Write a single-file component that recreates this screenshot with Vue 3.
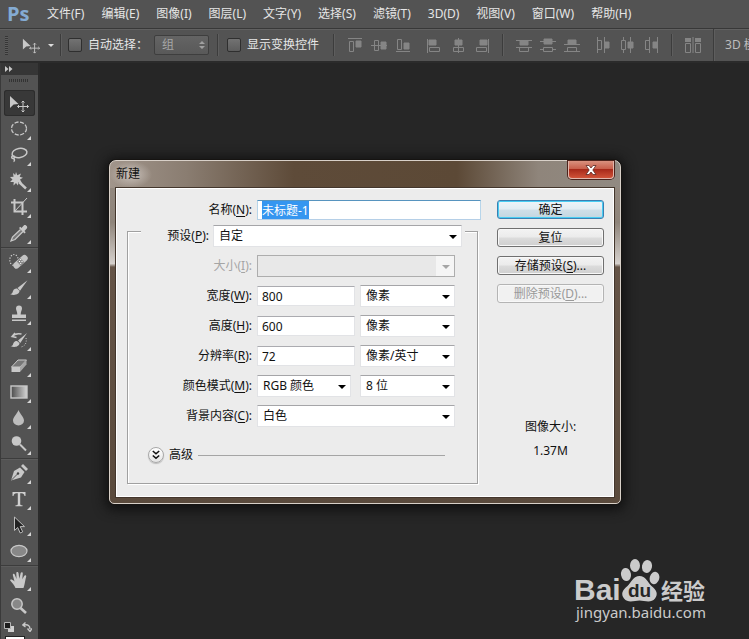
<script setup>
import { onMounted, ref } from 'vue'

const menus = ['文件(F)', '编辑(E)', '图像(I)', '图层(L)', '文字(Y)', '选择(S)', '滤镜(T)', '3D(D)', '视图(V)', '窗口(W)', '帮助(H)']

const alignGroups = [
  [
    { name: '顶对齐', art: '<path d="M5 5.5h14M6.500 8.500h4v10h-4z"/><path class="f" d="M13 8h5v6h-5z" fill="#858585"/>' },
    { name: '垂直居中对齐', art: '<path d="M4 12.500h16M7.500 7.500h4v10h-4z"/><path d="M14 9h5v7h-5z" fill="#858585"/>' },
    { name: '底对齐', art: '<path d="M5 18.500h14M6.500 6.500h4v10h-4z"/><path d="M13 10h5v6h-5z" fill="#858585"/>' }
  ],
  [
    { name: '左对齐', art: '<path d="M5.500 6v14M7.500 14.500h10v4h-10z"/><path d="M7 7h7v5h-7z" fill="#858585"/>' },
    { name: '水平居中对齐', art: '<path d="M12.500 5v15M7.500 14.500h10v4h-10z"/><path d="M9 7h7v5h-7z" fill="#858585"/>' },
    { name: '右对齐', art: '<path d="M18.500 6v14M6.500 14.500h10v4h-10z"/><path d="M10 7h7v5h-7z" fill="#858585"/>' }
  ],
  [
    { name: '按顶分布', art: '<path d="M4 7.500h16M4 14.500h16M7.500 14.500h9v4h-9z"/><path d="M8 8h8v4h-8z" fill="#858585"/>' },
    { name: '垂直居中分布', art: '<path d="M4 8.500h16M4 16.500h4M16 16.500h4M7.500 14.500h9v4h-9z"/><path d="M8 6h8v5h-8z" fill="#858585"/>' },
    { name: '按底分布', art: '<path d="M4 11.500h16M4 18.500h16M7.500 14.500h9v4h-9z"/><path d="M8 7h8v4h-8z" fill="#858585"/>' }
  ],
  [
    { name: '按左分布', art: '<path d="M6.500 4v16M13.500 4v16M6.500 7.500h4v9h-4z"/><path d="M14 9h4v6h-4z" fill="#858585"/>' },
    { name: '水平居中分布', art: '<path d="M8.500 4v3M8.500 17v3M15.500 4v16M6.500 7.500h4v9h-4z"/><path d="M13 9h5v6h-5z" fill="#858585"/>' },
    { name: '按右分布', art: '<path d="M10.500 4v16M18.500 4v16M6.500 7.500h4v9h-4z"/><path d="M14 9h4v6h-4z" fill="#858585"/>' }
  ]
]

const moveArt = '<path d="M1 3v12l3.600-3.400L9.500 11z" fill="#c8c8c8"/><path d="M14 8v11M8.500 13.500h11M12.500 9.500L14 8l1.500 1.500M12.500 17.500L14 19l1.500-1.500M10 12l-1.500 1.500L10 15M18 12l1.500 1.500L18 15" fill="none" stroke="#c8c8c8"/>'

const toolGroups = [
  [
    { name: '移动', art: moveArt, active: true },
    { name: '椭圆选框', art: '<ellipse cx="10" cy="9.500" rx="7.500" ry="6.500" fill="none" stroke="#c8c8c8" stroke-width="1.300" stroke-dasharray="4 1.600"/>', more: true },
    { name: '套索', art: '<g fill="none" stroke="#c8c8c8" stroke-width="1.500"><ellipse cx="10.500" cy="8" rx="7.500" ry="4.500" transform="rotate(-10 10.500 8)"/><path d="M4 10.500c-2 1-1.500 3 0 3s2.500-1.500.5-3M4.500 13.500c2 1 .5 3 0 3"/></g>', more: true },
    { name: '魔棒', art: '<path d="M7 1l1.300 3.200L12 2.500l-1.300 3.300 3.300 1-3 1.800 2 3.400-3.700-1L9 14.500 7 12l-2.500 2.500.2-3.500L1 11l2.500-2.500L1 6l3.500-.3L4 2l2.200 2z" fill="#c8c8c8"/><path d="M10 11l7 6.500" stroke="#c8c8c8" stroke-width="2.400"/>', more: true },
    { name: '裁剪', art: '<path d="M5.500 2v12.500H18M2 5.500h11.500V18" fill="none" stroke="#c8c8c8" stroke-width="2"/><path d="M6 14L18 1" stroke="#c8c8c8"/>', more: true },
    { name: '吸管', art: '<path d="M11.500 6.500L3.500 14 2 18l4-1.500 8-8" fill="#777" stroke="#c8c8c8" stroke-width="1.300"/><path d="M10 5l5.500 5.500 1.200-1.300L15.500 8 18 5.200c1-1.600-1.500-4-3-3L12.500 5l-1.200-1.200z" fill="#c8c8c8"/>', more: true }
  ],
  [
    { name: '污点修复画笔', art: '<ellipse cx="5" cy="8" rx="4.200" ry="5.500" fill="none" stroke="#d0d0d0" stroke-width="1.200" stroke-dasharray="1.200 1.500"/><rect x="3" y="6.500" width="17" height="6.500" rx="3" transform="rotate(-42 11.500 9.800)" fill="#c3c3c3"/><rect x="9" y="7" width="5" height="6" transform="rotate(-42 11.500 9.800)" fill="#8a8a8a"/><path d="M10 9.500h1M12.500 9.500h1M11.200 7.500h1M11.200 11.500h1" stroke="#fff"/>', more: true },
    { name: '画笔', art: '<path d="M18.500 2.200L8.500 10l2.500 2.700z" fill="#c8c8c8"/><path d="M8 10.500c-3-.5-4 2-4.500 4-.5 1-1.500 1.500-2.500 1.500 4 2 9.500.5 9.500-3.200z" fill="#c8c8c8"/>', more: true },
    { name: '仿制图章', art: '<path d="M7 4.500a3 3 0 1 1 6 0c0 1.800-1.300 3-1.300 6H17V14H3v-3.500h5.300c0-3-1.300-4.200-1.300-6zM3 15.500h14V17H3z" fill="#c8c8c8"/>', more: true },
    { name: '历史记录画笔', art: '<path d="M18 3l-9 7.500 2.300 2.500zM8 11c-3 0-3.500 2-4 3.500-.4 1-1.500 1.500-2.500 1.500 4 2 9 .5 9-3z" fill="#c8c8c8"/><path d="M3 6.500c3-3.500 7-3 9.500-2.500M6 3L3 6.500l4.500 1" fill="none" stroke="#c8c8c8" stroke-width="1.500"/><path d="M17 8c1 5-1 8-5 9" fill="none" stroke="#c8c8c8" stroke-dasharray="1 1.500"/>', more: true },
    { name: '橡皮擦', art: '<path d="M2.500 11L9 4h8.500L11 11z" fill="#777" stroke="#c8c8c8"/><path d="M2.500 11H11v5H2.500z" fill="#c8c8c8"/><path d="M11 11l6.500-7v4.500L11 16z" fill="#a5a5a5"/>', more: true },
    { name: '渐变', art: '<defs><linearGradient id="ramp"><stop offset="0" stop-color="#4a4a4a"/><stop offset="1" stop-color="#d5d5d5"/></linearGradient></defs><rect x="2" y="4" width="16" height="12" fill="url(#ramp)" stroke="#c8c8c8" stroke-width="1.400"/>', more: true },
    { name: '模糊', art: '<path d="M9.500 2C8 6 4 9 4 12.500a5.500 5 0 0 0 11 0C15 9 11 6 9.500 2z" fill="#bdbdbd"/>', more: true },
    { name: '减淡', art: '<circle cx="7.500" cy="7" r="4.800" fill="#c8c8c8"/><path d="M11 10.500l6 6" stroke="#c8c8c8" stroke-width="2"/>', more: true }
  ],
  [
    { name: '钢笔', art: '<path d="M2 17.500L5 8l6-3.500 4.500 4.500L12 14.500z" fill="#c8c8c8"/><path d="M12 3l2-2 5 5-2 2z" fill="#c8c8c8"/><path d="M2.500 17l6-6" stroke="#555"/><circle cx="9" cy="10.500" r="1.200" fill="#444"/>', more: true },
    { name: '文字', art: '<path d="M3.500 3h13v4h-1c-.4-2-1-2.800-3-2.800h-1.300v10.500c0 1.200.5 1.500 2.300 1.600v.9h-7v-.9c1.800-.1 2.300-.4 2.300-1.600V4.200H7.500c-2 0-2.600.8-3 2.800h-1z" fill="#cfcfcf"/>', more: true },
    { name: '路径选择', art: '<path d="M5.500 2v13.500l3.200-3 2.500 5.500 2.500-1.200-2.500-5.200h4.300z" fill="#222" stroke="#bdbdbd"/>', more: true },
    { name: '椭圆', art: '<ellipse cx="10" cy="10" rx="8" ry="5.700" fill="#888" stroke="#c8c8c8" stroke-width="1.200"/>', more: true }
  ],
  [
    { name: '抓手', art: '<path d="M6.500 18c-1-3-3.500-5-5.300-7.500C1 9 3 9 5.500 11.500L3.800 5c0-1.600 1.700-1.600 2.100 0L7.500 9 7.300 3c0-1.500 2-1.500 2.200 0l.8 5.700L11.700 3c.4-1.400 2.300-1 2.100.4L13.300 9.300l2-3.500c.8-1.200 2.300-.5 1.900.8C16 11 16 14 14.500 18z" fill="#c8c8c8"/>', more: true },
    { name: '缩放', art: '<circle cx="8" cy="8" r="5.200" fill="#888" stroke="#c8c8c8" stroke-width="1.500"/><path d="M11.500 12l5.500 5" stroke="#c8c8c8" stroke-width="2.600"/>' }
  ]
]

const docName = ref('未标题-1')
const width = ref('800')
const height = ref('600')
const resolution = ref('72')
const nameField = ref(null)

onMounted(() => {
  nameField.value.focus({ preventScroll: true })
  nameField.value.select()
})
</script>

<template>
  <div class="app">
    <nav class="menubar">
      <span class="brand">Ps</span>
      <button v-for="m in menus" :key="m" type="button" class="menu">{{ m }}</button>
    </nav>

    <div class="options">
      <i class="grip"></i>
      <svg class="current" viewBox="0 0 20 20" v-html="moveArt"></svg>
      <i class="caret"></i>
      <i class="rule"></i>
      <label class="check"><input type="checkbox" /><span>自动选择：</span></label>
      <span class="mini">
        <select aria-label="自动选择" disabled><option>组</option></select>
        <svg viewBox="0 0 8 10"><path d="M1 4l3-3 3 3zM1 6l3 3 3-3z" fill="#a0a0a0" /></svg>
      </span>
      <i class="rule"></i>
      <label class="check"><input type="checkbox" /><span>显示变换控件</span></label>
      <i class="rule"></i>
      <template v-for="(group, gi) in alignGroups" :key="gi">
        <i v-if="gi === 2" class="rule"></i>
        <div class="aligns">
          <button v-for="a in group" :key="a.name" type="button" :aria-label="a.name">
            <svg viewBox="0 0 24 24" fill="none" stroke="#858585" v-html="a.art"></svg>
          </button>
        </div>
      </template>
      <i class="rule"></i>
      <div class="aligns solo">
        <button type="button" aria-label="自动对齐图层">
          <svg viewBox="0 0 24 24" fill="none" stroke="#858585">
            <path d="M4.500 10.500h5v9h-5zM14.500 10.500h5v9h-5zM12 4v16" />
            <path d="M4 5h6v4H4zM14 5h6v4h-6z" fill="#858585" stroke="none" />
          </svg>
        </button>
      </div>
      <i class="rule full"></i>
      <span class="mode">3D 模式：</span>
    </div>

    <div class="body">
      <aside class="tools">
        <button type="button" class="expand" aria-label="展开面板">
          <svg viewBox="0 0 8 6"><path d="M0 0l3.500 3L0 6zM4 0l3.500 3L4 6z" fill="#c8c8c8" /></svg>
        </button>
        <i class="dots"></i>
        <div v-for="(group, gi) in toolGroups" :key="gi" class="group">
          <button v-for="t in group" :key="t.name" type="button" class="tool" :class="{ active: t.active, more: t.more }" :aria-label="t.name">
            <svg viewBox="0 0 20 20" v-html="t.art"></svg>
          </button>
        </div>
        <div class="swatches">
          <svg viewBox="0 0 10 10"><path d="M4 4h6v6H4z" fill="#d0d0d0" /><path d="M.5.5h6v6h-6z" fill="#1c1c1c" stroke="#b5b5b5" /></svg>
          <svg viewBox="0 0 10 10"><path d="M2 3c4-1 6 1 6 4M3.500.5L.8 3l2.700 2M5.500 6.500L8 9.500l2-3" fill="none" stroke="#c8c8c8" stroke-width="1.400" /></svg>
        </div>
        <i class="front"></i>
      </aside>

      <main class="canvas">
        <svg class="watermark" viewBox="0 0 136 72" role="img" aria-label="Baidu 经验">
          <g fill="#cbcbcb">
            <ellipse cx="52" cy="20.500" rx="5" ry="6.500" transform="rotate(-10 52 20.500)" />
            <ellipse cx="61" cy="11.500" rx="5" ry="6.500" />
            <ellipse cx="73" cy="12.500" rx="5" ry="6.500" transform="rotate(12 73 12.500)" />
            <ellipse cx="80.500" cy="24" rx="4.800" ry="6.300" transform="rotate(16 80.500 24)" />
            <path d="M65.500 22c6 0 8 6 12 10 5 4 7 8 3.500 12.500-4 5-10.500 2-15.500 2s-11.500 3-15.500-2C46.500 40 48.500 36 53.500 32c4-4 6-10 12-10z" />
            <text x="0" y="46" class="wm-bai">Bai</text>
            <text x="87" y="45" class="wm-cn">经验</text>
            <text x="2" y="64" class="wm-url">jingyan.baidu.com</text>
          </g>
          <text x="54" y="43" class="wm-du">du</text>
        </svg>
      </main>
    </div>

    <section class="dialog" role="dialog" aria-labelledby="dlg-title">
      <header class="title">
        <h1 id="dlg-title">新建</h1>
        <button type="button" class="close" aria-label="关闭">
          <svg viewBox="0 0 12 10"><path d="M1 .5h3l2 2.500L8 .5h3L7.800 5 11 9.500H8L6 7 4 9.500H1L4.200 5z" fill="#fff" stroke="#5c2a24" stroke-width=".8" /></svg>
        </button>
      </header>
      <form class="client" @submit.prevent>
        <div class="fields">
          <div class="row name">
            <label for="f-name">名称(<u>N</u>):</label>
            <input id="f-name" ref="nameField" v-model="docName" type="text" />
          </div>
          <fieldset>
            <div class="row preset">
              <label for="f-preset">预设(<u>P</u>):</label>
              <span class="pick"><select id="f-preset"><option>自定</option></select></span>
            </div>
            <div class="row off">
              <label for="f-size">大小(<u>I</u>):</label>
              <span class="pick"><select id="f-size" disabled><option></option></select></span>
            </div>
            <div class="row">
              <label for="f-w">宽度(<u>W</u>):</label>
              <input id="f-w" v-model="width" type="text" />
              <span class="pick unit"><select aria-label="宽度单位"><option>像素</option></select></span>
            </div>
            <div class="row">
              <label for="f-h">高度(<u>H</u>):</label>
              <input id="f-h" v-model="height" type="text" />
              <span class="pick unit"><select aria-label="高度单位"><option>像素</option></select></span>
            </div>
            <div class="row">
              <label for="f-r">分辨率(<u>R</u>):</label>
              <input id="f-r" v-model="resolution" type="text" />
              <span class="pick unit"><select aria-label="分辨率单位"><option>像素/英寸</option></select></span>
            </div>
            <div class="row modes">
              <label for="f-m">颜色模式(<u>M</u>):</label>
              <span class="pick"><select id="f-m"><option>RGB 颜色</option></select></span>
              <span class="pick unit"><select aria-label="位深度"><option>8 位</option></select></span>
            </div>
            <div class="row">
              <label for="f-c">背景内容(<u>C</u>):</label>
              <span class="pick"><select id="f-c"><option>白色</option></select></span>
            </div>
            <div class="advanced">
              <button id="adv" type="button" aria-label="高级">
                <svg viewBox="0 0 8 10"><path d="M.8 1L4 3.800 7.200 1M.8 5.500L4 8.300l3.200-2.800" fill="none" stroke="#111" stroke-width="1.600" /></svg>
              </button>
              <label for="adv">高级</label>
              <hr />
            </div>
          </fieldset>
        </div>
        <div class="side">
          <button type="submit" class="btn primary">确定</button>
          <button type="button" class="btn">复位</button>
          <button type="button" class="btn">存储预设(<u>S</u>)...</button>
          <button type="button" class="btn" disabled>删除预设(<u>D</u>)...</button>
          <p class="size"><span>图像大小:</span><span>1.37M</span></p>
        </div>
      </form>
    </section>
  </div>
</template>

<style>
html,
body {
  margin: 0;
  background: #262626;
}
</style>

<style scoped>
.app,
.app * {
  box-sizing: border-box;
}
.app {
  position: relative;
  display: flex;
  flex-direction: column;
  height: 100vh;
  overflow: hidden;
  background: #262626;
  color: #e6e6e6;
  font: 12px/16px "Noto Sans", "Noto Sans CJK SC", sans-serif;
}
button,
input,
select {
  margin: 0;
  padding: 0;
  border: 0;
  border-radius: 0;
  background: none;
  color: inherit;
  font: inherit;
}
svg {
  display: block;
}
i {
  display: block;
  flex: none;
}

.menubar {
  display: flex;
  flex: none;
  align-items: center;
  gap: 17px;
  height: 28px;
  padding-left: 7px;
  background: #535353;
  white-space: nowrap;
}
.brand {
  width: 23px;
  color: #84abd3;
  font: bold 20px/28px "Open Sans", sans-serif;
}
.menu {
  flex: none;
}

.options {
  display: flex;
  flex: none;
  align-items: center;
  height: 35px;
  border-top: 1px solid #383838;
  border-bottom: 2px solid #2b2b2b;
  background: #535353;
  box-shadow: inset 0 1px #616161;
  white-space: nowrap;
  overflow: hidden;
}
.options > * {
  flex: none;
}
.grip {
  width: 3px;
  height: 19px;
  margin: 0 14px 0 5px;
  background: repeating-linear-gradient(#363636 0 1px, #5c5c5c 1px 2px);
}
.current {
  width: 18px;
  height: 18px;
}
.caret {
  margin: 0 6px 0 8px;
  border: 3px solid transparent;
  border-top-color: #ddd;
  border-bottom: 0;
}
.rule {
  width: 2px;
  height: 22px;
  margin: 0 8px;
  border-left: 1px solid #3c3c3c;
  background: #5e5e5e;
}
.caret + .rule {
  margin: 0 6px 0 0;
}
.rule.full {
  height: 32px;
  margin-right: 10px;
}
.check {
  display: flex;
  align-items: center;
  gap: 6px;
  margin-right: 6px;
}
.check input {
  appearance: none;
  width: 14px;
  height: 14px;
  border: 1px solid #2f2f2f;
  border-radius: 2px;
  background: linear-gradient(#727272, #5d5d5d);
}
.mini {
  position: relative;
  width: 55px;
}
.mini select {
  display: block;
  appearance: none;
  width: 100%;
  height: 20px;
  padding-left: 7px;
  border: 1px solid #3e3e3e;
  border-radius: 2px;
  background: linear-gradient(#646464, #595959);
  color: #a6a6a6;
  opacity: 1;
}
.mini svg {
  position: absolute;
  top: 5px;
  right: 3px;
  width: 8px;
  height: 10px;
}
.aligns {
  display: flex;
  margin-right: 7px;
}
.aligns:has(+ .rule) {
  margin-right: 0;
}
.aligns button,
.aligns svg {
  width: 24px;
  height: 24px;
}
.mode {
  color: #bdbdbd;
}

.body {
  display: flex;
  flex: 1;
  min-height: 0;
}
.tools {
  display: flex;
  flex: none;
  flex-direction: column;
  align-items: stretch;
  width: 40px;
  border-left: 1px solid #3a3a3a;
  border-right: 2px solid #2b2b2b;
  background: #535353;
  overflow: hidden;
}
.expand {
  flex: none;
  height: 12px;
  padding-left: 4px;
  background: #363636;
}
.expand svg {
  width: 8px;
  height: 6px;
}
.dots {
  width: 20px;
  height: 3px;
  margin: 4px 0 8px 8px;
  background: repeating-linear-gradient(90deg, #333 0 1px, #535353 1px 2px);
}
.group {
  flex: none;
  margin-bottom: 1px;
}
.group + .group {
  border-top: 1px solid #3c3c3c;
  box-shadow: inset 0 1px #5c5c5c;
  padding-top: 1px;
}
.tool {
  position: relative;
  display: flex;
  align-items: center;
  width: 31px;
  height: 26px;
  margin-left: 3px;
  padding-left: 5px;
  border-radius: 3px;
}
.tool svg {
  width: 20px;
  height: 20px;
}
.tool.active {
  background: #383838;
  box-shadow: inset 0 0 0 1px #2c2c2c;
}
.tool.more::after {
  content: "";
  position: absolute;
  right: 4px;
  bottom: 2px;
  border: 2px solid #d5d5d5;
  border-top-color: transparent;
  border-left-color: transparent;
}
.swatches {
  display: flex;
  flex: none;
  gap: 8px;
  padding: 2px 0 4px 3px;
}
.swatches svg {
  width: 10px;
  height: 10px;
}
.front {
  width: 20px;
  height: 20px;
  margin-left: 4px;
  border: 1px solid #222;
  background: #fff;
}

.canvas {
  position: relative;
  flex: 1;
}
.watermark {
  position: absolute;
  right: 39px;
  bottom: 13px;
  width: 136px;
  height: 72px;
}
.wm-bai {
  font: bold 30px "Liberation Sans", sans-serif;
}
.wm-cn {
  font: bold 22px "Noto Sans CJK SC", sans-serif;
}
.wm-url {
  font: 15px "Noto Sans", sans-serif;
}
.wm-du {
  fill: #262626;
  font: bold 19px "Liberation Sans", sans-serif;
}

.dialog {
  position: absolute;
  top: 160px;
  left: 109px;
  width: 512px;
  padding: 0 6px 6px;
  border: 1px solid #d8d0c8;
  border-radius: 7px 7px 5px 5px;
  background:
    linear-gradient(90deg, #a1958b 0, #8a7d71 15%, #5e4b39 36%, #5c4936 68%, #8f857b 84%, #918a82 100%) top / 100% 27px no-repeat,
    linear-gradient(#958b82 0, #8f857b 18%, #d5d0cc 30%, #655447 31%, #5a4a3c 100%);
  box-shadow: 0 0 0 1px #161412, 0 2px 12px 4px #111;
  color: #111;
}
.title {
  display: flex;
  justify-content: space-between;
  height: 27px;
}
.title h1 {
  margin: 0 0 0 -6px;
  padding: 5px 12px 0 6px;
  background: radial-gradient(closest-side, #c9c1ba, transparent);
  font: inherit;
}
.close {
  display: flex;
  align-items: center;
  justify-content: center;
  width: 46px;
  height: 18px;
  border: 1px solid #e2b7ac;
  border-top: 0;
  border-radius: 0 0 4px 4px;
  background: linear-gradient(#d9917f 0, #c8604c 45%, #a82a1a 50%, #d05238 100%);
  box-shadow: 0 0 0 1px #4b231c;
}
.close svg {
  width: 12px;
  height: 10px;
}
.client {
  display: flex;
  justify-content: space-between;
  padding: 11px 9px 12px 10px;
  border: 1px solid #fff;
  outline: 1px solid #43362c;
  background: #ececec;
}
.fields {
  flex: 1;
  max-width: 354px;
}
.row {
  display: grid;
  grid-template-columns: 125px 98px 95px;
  column-gap: 5px;
  align-items: center;
  height: 30px;
}
.row label {
  text-align: right;
  white-space: nowrap;
}
.row > .pick:not(.unit) {
  grid-column: 2 / -1;
}
.modes > .pick:not(.unit) {
  grid-column: 2;
  margin-right: 4px;
}
u {
  text-underline-offset: 2px;
}
.row.name {
  grid-template-columns: 125px 224px;
  height: 20px;
}
.row.preset {
  grid-template-columns: 82px 249px;
  column-gap: 4px;
  margin: -11px 12px 0 -1px;
  background: linear-gradient(#ececec, #ececec) 14px 0 / 326px 14px no-repeat;
}
.row input {
  width: 100%;
  height: 20px;
  padding: 0 4px;
  border: 1px solid #e2e3e6;
  border-top-color: #ababb0;
  background: #fff;
  outline: 0;
}
.row.name input {
  border-color: #5794bf #b7d5ea #b5cfe7;
}
.row input::selection {
  background: #3596f0;
  color: #fff;
}
.pick {
  position: relative;
}
.pick select {
  display: block;
  appearance: none;
  width: 100%;
  height: 22px;
  padding: 0 16px 0 5px;
  border: 1px solid #e2e3e6;
  border-top-color: #a5a5a8;
  background: #fff;
  opacity: 1;
}
.pick::after {
  content: "";
  position: absolute;
  top: 10px;
  right: 5px;
  border: 4px solid transparent;
  border-top-color: #000;
  border-bottom: 0;
  pointer-events: none;
}
.off {
  color: #a5a5a5;
}
.off select {
  border-color: #adadad;
  background: linear-gradient(90deg, transparent calc(100% - 18px), #f5f5f5 0), #e8e8e8;
}
.off .pick::after {
  border-top-color: #a5a5a5;
}
fieldset {
  min-width: 0;
  width: 351px;
  margin: 11px 0 0;
  padding: 0 0 20px;
  border: 1px solid #a0a0a0;
  box-shadow: 1px 1px #fff, inset 1px 1px #fff;
}
fieldset .row {
  margin-left: -1px;
}
.advanced {
  display: flex;
  align-items: center;
  gap: 5px;
  padding: 16px 32px 0 20px;
}
.advanced button {
  display: flex;
  align-items: center;
  justify-content: center;
  width: 16px;
  height: 16px;
  border: 1px solid #a8a8a8;
  border-radius: 50%;
  background: linear-gradient(#fff, #e4e4e4);
  box-shadow: 0 1px 1px #bbb;
}
.advanced svg {
  width: 8px;
  height: 10px;
}
.advanced hr {
  flex: 1;
  height: 1px;
  margin: 0;
  border: 0;
  background: #a5a5a5;
}
.side {
  display: flex;
  flex: none;
  flex-direction: column;
  gap: 9px;
  width: 107px;
}
.btn {
  height: 19px;
  border: 1px solid #707070;
  border-radius: 3px;
  background: linear-gradient(#f3f3f3 0, #ebebeb 48%, #dcdcdc 52%, #cfcfcf 100%);
  box-shadow: inset 0 0 0 1px #f8f8f8;
  line-height: 17px;
}
.btn.primary {
  border-color: #3c7fb1;
  box-shadow: inset 0 0 0 1px #48cdf3;
  background: linear-gradient(#eef5f9 0, #e2edf3 48%, #d0dfe8 52%, #c2d6e0 100%);
}
.btn:disabled {
  border-color: #b4b4b4;
  background: #f1f1f1;
  color: #999;
}
.size {
  display: flex;
  flex-direction: column;
  gap: 8px;
  margin: auto 0 25px;
  text-align: center;
}
</style>
